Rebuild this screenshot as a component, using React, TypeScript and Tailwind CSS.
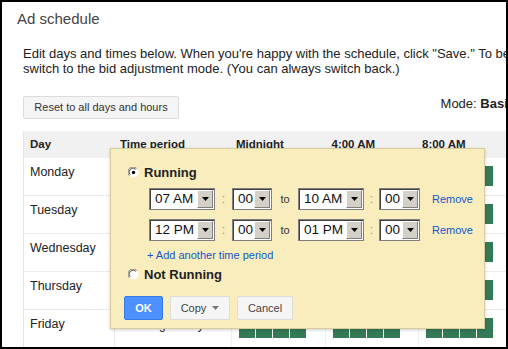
const days = ['Monday', 'Tuesday', 'Wednesday', 'Thursday', 'Friday']

function Select({ value, width }: { value: string; width: string }) {
  return (
    <div className={`${width} flex h-[22px] items-stretch border border-[#7f7f7f] bg-white p-[1px] shadow-[inset_1px_1px_0_#404040]`}>
      <div className="flex flex-1 items-center pl-[4px] text-[13.5px] leading-none text-[#111]">{value}</div>
      <div className="flex w-[16px] items-center justify-center border border-t-white border-l-white border-r-[#808080] border-b-[#808080] bg-[#d4d0c8]">
        <svg width="7" height="4" viewBox="0 0 7 4">
          <path d="M0 0h7L3.5 4z" fill="#000" />
        </svg>
      </div>
    </div>
  )
}

function Radio({ checked }: { checked?: boolean }) {
  return (
    <svg width="11" height="11" viewBox="0 0 12 12" className="shrink-0">
      <circle cx="6" cy="6" r="5.5" fill="#fff" />
      <path d="M1.5 9.5A5.5 5.5 0 0 1 9.5 1.5" stroke="#808080" strokeWidth="1" fill="none" />
      <path d="M2.5 8.5A4 4 0 0 1 8.5 2.5" stroke="#404040" strokeWidth="1" fill="none" />
      {checked && <circle cx="6" cy="6" r="1.8" fill="#000" />}
    </svg>
  )
}

function TimeRow({ from, to }: { from: string; to: string }) {
  return (
    <div className="flex items-center">
      <Select value={from} width="w-[66px]" />
      <span className="w-[17px] text-center text-[12px] text-[#999]">:</span>
      <Select value="00" width="w-[40px]" />
      <span className="w-[26px] text-center text-[11px] text-[#333]">to</span>
      <Select value={to} width="w-[66px]" />
      <span className="w-[15px] text-center text-[12px] text-[#999]">:</span>
      <Select value="00" width="w-[41px]" />
      <span className="ml-[12px] text-[11px] text-[#15c]">Remove</span>
    </div>
  )
}

function Bars() {
  return (
    <div className="flex">
      {[0, 1, 2].map((i) => (
        <div key={i} className="flex h-[38px] w-[93.5px] gap-[1px] border-l border-[#f0f0f0] pl-[7px] pt-[8px]">
          {[0, 1, 2, 3].map((j) => (
            <div key={j} className="h-[20px] w-[16px] bg-[#357a57]" />
          ))}
        </div>
      ))}
    </div>
  )
}

export default function App() {
  return (
    <div className="relative h-[349px] w-[508px] overflow-hidden border-2 border-black bg-white font-['Liberation_Sans',Arial,sans-serif] text-[#222]">
      <h1 className="pl-[15px] pt-[7px] text-[15px] leading-[20px] text-[#444]">Ad schedule</h1>

      <p className="mt-[17px] whitespace-nowrap pl-[21px] text-[13px] leading-[15px]">
        Edit days and times below. When you're happy with the schedule, click "Save." To be able to set bid adjustments,
        <br />
        switch to the bid adjustment mode. (You can always switch back.)
      </p>

      <div className="ml-[21px] mt-[20px] flex w-[492px] items-start justify-between">
        <button className="h-[23px] w-[156px] rounded-[2px] border border-[#dcdcdc] bg-[#f5f5f5] text-[11px] text-[#333]">
          Reset to all days and hours
        </button>
        <span className="whitespace-nowrap text-[13px] leading-[15px]">
          Mode: <b>Basic</b>
        </span>
      </div>

      <div className="ml-[21px] mt-[12px] w-[600px] border-l border-[#e5e5e5]">
        <div className="flex h-[27px] items-center bg-[#f1f1f1] text-[11.5px] font-bold text-[#222]">
          <div className="w-[90px] pl-[6px]">Day</div>
          <div className="w-[117px] pl-[6px]">Time period</div>
          <div className="w-[93.5px] pl-[5px]">Midnight</div>
          <div className="w-[93.5px] pl-[7px]">4:00 AM</div>
          <div className="w-[93.5px] pl-[4px]">8:00 AM</div>
        </div>
        {days.map((d) => (
          <div key={d} className="flex h-[38px] border-b border-[#ebebeb]">
            <div className="w-[90px] pl-[6px] pt-[7px] text-[12.5px] leading-[15px]">{d}</div>
            <div className="w-[117px] border-l border-[#ebebeb] pl-[6px] pt-[8px] text-[12px] leading-[15px]">
              Running all day
            </div>
            <Bars />
          </div>
        ))}
      </div>

      <div className="absolute left-[108px] top-[146px] h-[181px] w-[375px] border border-[#d9cd9c] bg-[#f9edbe] shadow-[0_1px_3px_rgba(0,0,0,0.2)]">
        <div className="flex items-center gap-[5px] pl-[17px] pt-[16px]">
          <Radio checked />
          <span className="text-[13px] font-bold leading-[15px] text-[#222]">Running</span>
        </div>
        <div className="mt-[8px] flex flex-col gap-[9px] pl-[38px]">
          <TimeRow from="07 AM" to="10 AM" />
          <TimeRow from="12 PM" to="01 PM" />
        </div>
        <div className="mt-[8px] pl-[36px] text-[11px] leading-[13px] text-[#15c]">+ Add another time period</div>
        <div className="mt-[5px] flex items-center gap-[5px] pl-[17px]">
          <Radio />
          <span className="text-[13px] font-bold leading-[15px] text-[#222]">Not Running</span>
        </div>
        <div className="mt-[14px] flex gap-[7px] pl-[13px]">
          <button className="h-[24px] w-[39px] rounded-[2px] border border-[#3079ed] bg-[#4d90fe] text-[11px] font-bold text-white">
            OK
          </button>
          <button className="flex h-[24px] w-[60px] items-center justify-center gap-[6px] rounded-[2px] border border-[#dcdcdc] bg-[#f5f5f5] text-[11px] text-[#444]">
            Copy
            <svg width="7" height="4" viewBox="0 0 7 4">
              <path d="M0 0h7L3.5 4z" fill="#777" />
            </svg>
          </button>
          <button className="h-[24px] w-[56px] rounded-[2px] border border-[#dcdcdc] bg-[#f5f5f5] text-[11px] text-[#444]">
            Cancel
          </button>
        </div>
      </div>
    </div>
  )
}
